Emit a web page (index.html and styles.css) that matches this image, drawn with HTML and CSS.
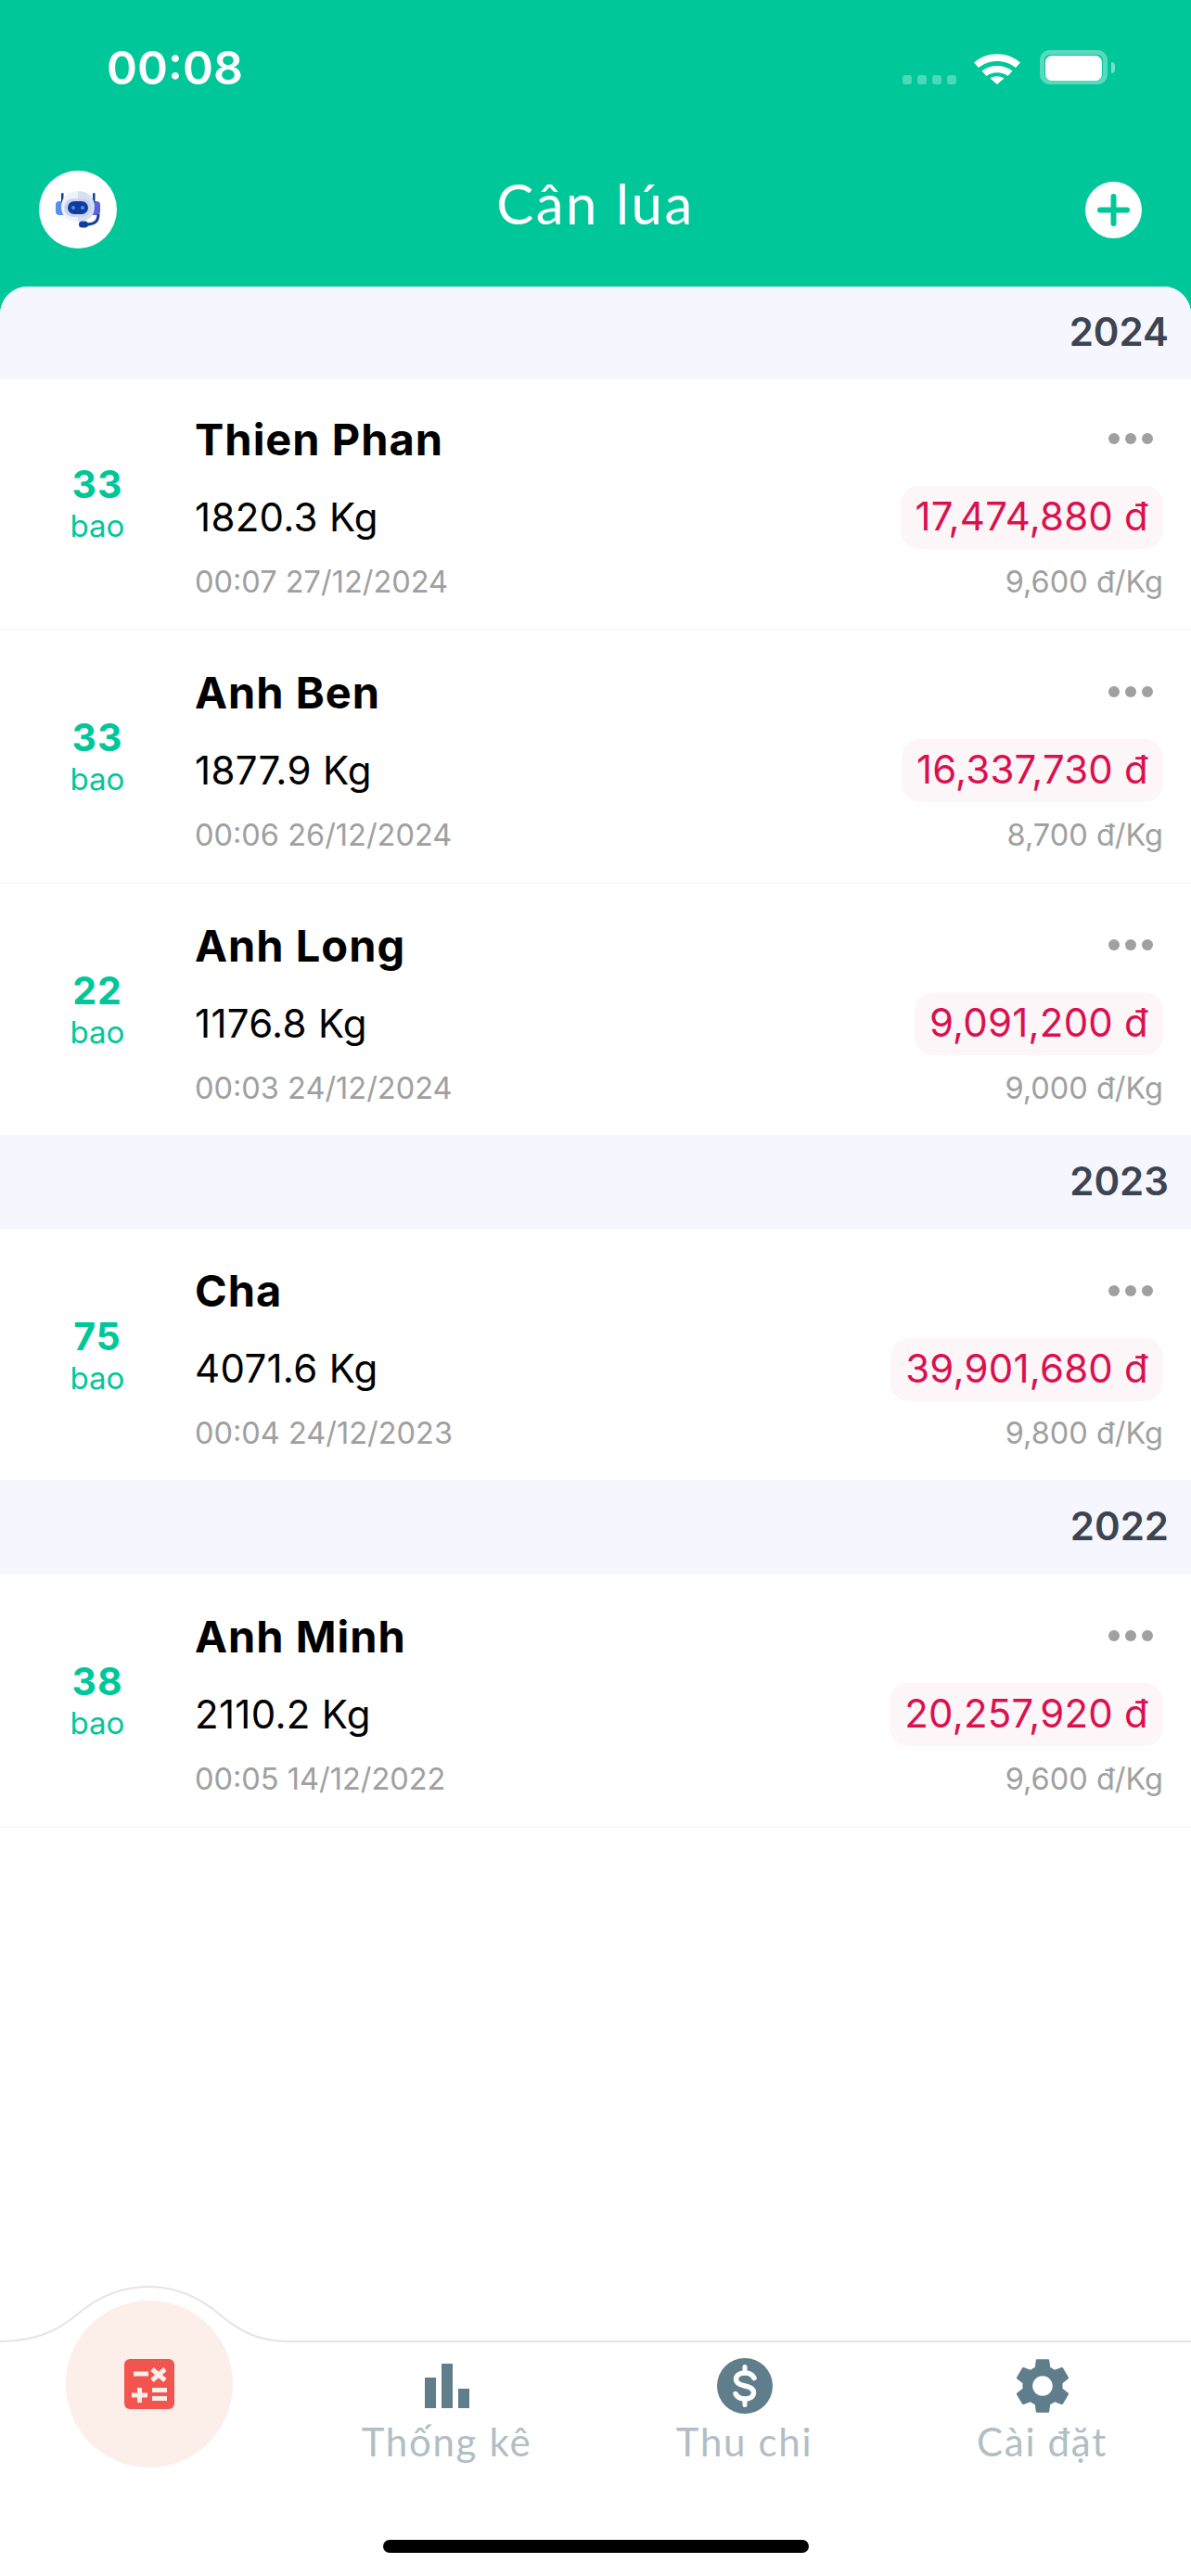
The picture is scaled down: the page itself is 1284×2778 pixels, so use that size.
FILE: index.html
```html
<!DOCTYPE html>
<html lang="vi">
<head>
    <meta charset="UTF-8">
    <meta name="viewport" content="width=device-width, initial-scale=1.0">
    <title>Cân lúa</title>
    <link rel="stylesheet" href="styles.css">
</head>
<body>
    <div class="app">
        <header class="header">
            <div class="status-bar">
                <span class="clock">00:08</span>
                <div class="status-icons">
                    <div class="signal"><i></i><i></i><i></i><i></i></div>
                    <svg class="wifi" width="52" height="37" viewBox="0 0 52 37">
                        <path d="M1 13.5C14.500 1 37.500 1 51 13.500L46 19C35 9.500 17 9.500 6 19Z" fill="#fff"/>
                        <path d="M9.500 22.500C18 15 34 15 42.500 22.500L37.500 28C31 23 21 23 14.500 28Z" fill="#fff"/>
                        <path d="M18.500 30.500C23 27.500 29 27.500 33.500 30.500L26 37Z" fill="#fff"/>
                    </svg>
                    <div class="battery"><div class="battery-fill"></div></div>
                    <div class="battery-cap"></div>
                </div>
            </div>
            <div class="title-bar">
                <div class="bot-btn">
                    <svg width="84" height="84" viewBox="0 0 84 84">
                        <rect x="18" y="33" width="11" height="15" rx="4" fill="#5b8def"/>
                        <rect x="55" y="33" width="11" height="15" rx="4" fill="#5b5fe0"/>
                        <rect x="24" y="24" width="2.500" height="11" rx="1.200" fill="#123f95"/>
                        <rect x="58" y="24" width="2.500" height="11" rx="1.200" fill="#123f95"/>
                        <path d="M42 22C31 22 24 29 24 39C24 49 31 55 42 55Z" fill="#eef2fa"/>
                        <path d="M42 22C53 22 60 29 60 39C60 49 53 55 42 55Z" fill="#d6e0f2"/>
                        <rect x="27" y="30" width="30" height="20" rx="10" fill="#c9d5ec"/>
                        <rect x="31" y="33" width="22" height="14" rx="7" fill="#0f3d9c"/>
                        <circle cx="37" cy="40" r="2" fill="#4f8df5"/>
                        <circle cx="47" cy="40" r="2" fill="#4f8df5"/>
                        <path d="M64 47C64 55 60 58 50 58" fill="none" stroke="#123f95" stroke-width="3"/>
                        <rect x="43" y="54.500" width="10" height="7" rx="3.500" fill="#123f95"/>
                    </svg>
                </div>
                <h1 class="title">Cân lúa</h1>
                <div class="add-btn">
                    <svg width="61" height="61" viewBox="0 0 61 61">
                        <path d="M30.500 16V45M16 30.500H45" stroke="#00c79a" stroke-width="6" stroke-linecap="round"/>
                    </svg>
                </div>
            </div>
        </header>

        <main class="sheet">
            <div class="year first">2024</div>
            <div class="row first">
                <div class="count"><b>33</b><span>bao</span></div>
                <div class="info">
                    <div class="line-top"><div class="name">Thien Phan</div><div class="dots"><i></i><i></i><i></i></div></div>
                    <div class="line-mid"><div class="weight">1820.3 Kg</div><div class="amount">17,474,880 đ</div></div>
                    <div class="line-low"><span>00:07 27/12/2024</span><span>9,600 đ/Kg</span></div>
                </div>
            </div>
            <div class="row">
                <div class="count"><b>33</b><span>bao</span></div>
                <div class="info">
                    <div class="line-top"><div class="name">Anh Ben</div><div class="dots"><i></i><i></i><i></i></div></div>
                    <div class="line-mid"><div class="weight">1877.9 Kg</div><div class="amount">16,337,730 đ</div></div>
                    <div class="line-low"><span>00:06 26/12/2024</span><span>8,700 đ/Kg</span></div>
                </div>
            </div>
            <div class="row last">
                <div class="count"><b>22</b><span>bao</span></div>
                <div class="info">
                    <div class="line-top"><div class="name">Anh Long</div><div class="dots"><i></i><i></i><i></i></div></div>
                    <div class="line-mid"><div class="weight">1176.8 Kg</div><div class="amount">9,091,200 đ</div></div>
                    <div class="line-low"><span>00:03 24/12/2024</span><span>9,000 đ/Kg</span></div>
                </div>
            </div>
            <div class="year">2023</div>
            <div class="row last">
                <div class="count"><b>75</b><span>bao</span></div>
                <div class="info">
                    <div class="line-top"><div class="name">Cha</div><div class="dots"><i></i><i></i><i></i></div></div>
                    <div class="line-mid"><div class="weight">4071.6 Kg</div><div class="amount">39,901,680 đ</div></div>
                    <div class="line-low"><span>00:04 24/12/2023</span><span>9,800 đ/Kg</span></div>
                </div>
            </div>
            <div class="year">2022</div>
            <div class="row">
                <div class="count"><b>38</b><span>bao</span></div>
                <div class="info">
                    <div class="line-top"><div class="name">Anh Minh</div><div class="dots"><i></i><i></i><i></i></div></div>
                    <div class="line-mid"><div class="weight">2110.2 Kg</div><div class="amount">20,257,920 đ</div></div>
                    <div class="line-low"><span>00:05 14/12/2022</span><span>9,600 đ/Kg</span></div>
                </div>
            </div>
        </main>

        <footer class="tabbar">
            <svg class="tab-curve" width="1284" height="62" viewBox="0 0 1284 62">
                <path d="M0 60C35 60 60 50 82 32C105 12 130 1 160 1C190 1 215 12 238 32C260 50 280 60 310 60H1284" fill="none" stroke="#e2e4e6" stroke-width="2"/>
            </svg>
            <nav class="tabs">
                <div class="tab">
                    <div class="calc-btn">
                        <svg width="54" height="54" viewBox="0 0 54 54">
                            <rect width="54" height="54" rx="6" fill="#f25450"/>
                            <path d="M10 16H26M30 11L44 23M44 11L30 23M8 39H25M16.500 31V47M30 33.500H46M30 42.500H46" stroke="#fceee9" stroke-width="5"/>
                        </svg>
                    </div>
                </div>
                <div class="tab">
                    <svg class="tab-icon" width="60" height="60" viewBox="0 0 60 60">
                        <rect x="6" y="21" width="12" height="33" fill="#607d8b"/>
                        <rect x="24" y="6" width="12" height="48" fill="#607d8b"/>
                        <rect x="42" y="33" width="12" height="21" fill="#607d8b"/>
                    </svg>
                    <span class="tab-label">Thống kê</span>
                </div>
                <div class="tab">
                    <svg class="tab-icon" width="60" height="60" viewBox="0 0 60 60">
                        <circle cx="30" cy="30" r="30" fill="#607d8b"/>
                        <path d="M40 21.500C38 17.500 34.500 16 30.500 16C24.500 16 20.500 18.500 20.500 22.800C20.500 27.500 25 29 30 30C35 31 39.500 32.500 39.500 37.200C39.500 41.500 35.500 44 30 44C25.500 44 22 42.500 20 38.500" fill="none" stroke="#fff" stroke-width="5.500" stroke-linecap="round"/>
                        <path d="M30 9.500V14M30 46V50.500" stroke="#fff" stroke-width="5" stroke-linecap="round"/>
                    </svg>
                    <span class="tab-label">Thu chi</span>
                </div>
                <div class="tab">
                    <svg class="tab-icon" width="60" height="60" viewBox="2.400 2 19.200 20">
                        <path fill="#607d8b" d="M19.140 12.940c.04-.3.06-.61.06-.94 0-.32-.02-.64-.07-.94l2.030-1.580c.18-.14.23-.41.12-.61l-1.920-3.320c-.12-.22-.37-.29-.59-.22l-2.390.96c-.5-.38-1.030-.7-1.620-.94l-.36-2.540c-.04-.24-.24-.41-.48-.41h-3.840c-.24 0-.43.17-.47.41l-.36 2.540c-.59.24-1.130.57-1.620.94l-2.390-.96c-.22-.08-.47 0-.59.22L2.740 8.870c-.12.21-.08.47.12.61l2.030 1.580c-.05.3-.09.63-.09.94s.02.64.07.94l-2.030 1.580c-.18.14-.23.41-.12.61l1.920 3.320c.12.22.37.29.59.22l2.390-.96c.5.38 1.030.7 1.620.94l.36 2.540c.05.24.24.41.48.41h3.840c.24 0 .44-.17.47-.41l.36-2.540c.59-.24 1.130-.56 1.620-.94l2.390.96c.22.08.47 0 .59-.22l1.920-3.320c.12-.22.07-.47-.12-.61l-2.010-1.580zM12 15.600c-1.980 0-3.600-1.620-3.600-3.600s1.620-3.600 3.600-3.600 3.600 1.620 3.600 3.600-1.620 3.600-3.600 3.600z"/>
                    </svg>
                    <span class="tab-label">Cài đặt</span>
                </div>
            </nav>
            <div class="home-bar"></div>
        </footer>
    </div>
</body>
</html>
```

FILE: styles.css
```css
:root {
    --green: #00c79a;
    --year-bg: #f6f7fe;
    --grey: #a0a0a0;
    --red: #d9114f;
    --tab-text: #b0bec5;
}

* {
    margin: 0;
    padding: 0;
    box-sizing: border-box;
}

body {
    font-family: "Inter", "Liberation Sans", sans-serif;
    color: #000;
    background-color: #fff;
}

.app {
    display: flex;
    flex-direction: column;
    height: 100vh;
    overflow: hidden;
    background-color: var(--green);
}

/* header */
.header {
    height: 309px;
    color: #fff;
}

.status-bar {
    display: flex;
    justify-content: space-between;
    align-items: flex-start;
    height: 183px;
    padding: 43px 82px 0 115px;
}

.clock {
    font-size: 50px;
    font-weight: 600;
    line-height: 60px;
}

.status-icons {
    display: flex;
    align-items: flex-start;
    margin-top: 10px;
}

.signal {
    display: flex;
    gap: 6px;
    margin: 28px 18px 0 0;
}

.signal i {
    width: 10px;
    height: 10px;
    border-radius: 3px;
    background-color: rgba(255, 255, 255, 0.3);
}

.wifi {
    margin: 1px 19px 0 0;
}

.battery {
    width: 75px;
    height: 39px;
    padding: 5px;
    border: 1px solid transparent;
    border-radius: 12px;
    box-shadow: inset 0 0 0 5px rgba(255, 255, 255, 0.35);
}

.battery-fill {
    height: 100%;
    margin: 1px;
    border-radius: 7px;
    background-color: #fff;
}

.battery-cap {
    width: 4px;
    height: 12px;
    margin: 14px 0 0 3px;
    border-radius: 0 4px 4px 0;
    background-color: rgba(255, 255, 255, 0.45);
}

.title-bar {
    display: grid;
    grid-template-columns: 1fr auto 1fr;
    align-items: center;
    height: 84px;
    padding: 0 42px;
}

.bot-btn {
    width: 84px;
    height: 84px;
    border-radius: 50%;
    background-color: #fff;
}

.add-btn {
    justify-self: end;
    width: 61px;
    height: 61px;
    margin-right: 11px;
    border-radius: 50%;
    background-color: #fff;
}

.title {
    padding-bottom: 14px;
    font-family: "Lato", sans-serif;
    font-size: 60px;
    font-weight: 400;
    letter-spacing: 2.5px;
}

/* list */
.sheet {
    flex: 1;
    min-height: 0;
    border-radius: 30px 30px 0 0;
    overflow: hidden;
    background-color: #fff;
}

.year {
    height: 102px;
    padding-right: 24px;
    font-size: 42px;
    font-weight: 600;
    line-height: 99px;
    text-align: right;
    color: #3d4451;
    background-color: var(--year-bg);
}

.year.first {
    height: 100px;
    line-height: 97px;
}

.row {
    display: flex;
    height: 273px;
    padding: 32px 30px 0 0;
    border-bottom: 2px solid var(--year-bg);
}

.row.first {
    height: 271px;
    padding-top: 30px;
}

.row.last {
    height: 270.5px;
    border-bottom: none;
}

.count {
    display: flex;
    flex-direction: column;
    align-items: center;
    flex: none;
    width: 210px;
    padding-top: 58px;
    color: var(--green);
}

.count b {
    font-size: 41px;
    font-weight: 700;
    line-height: 50px;
    letter-spacing: 1px;
}

.count span {
    font-size: 33px;
    line-height: 40px;
}

.info {
    flex: 1;
}

.line-top,
.line-mid,
.line-low {
    display: flex;
    justify-content: space-between;
    align-items: center;
}

.line-top {
    height: 68px;
}

.line-mid {
    height: 68px;
    margin-top: 17px;
}

.line-low {
    height: 52px;
    margin-top: 9px;
    font-size: 32.5px;
    color: var(--grey);
}

.name {
    font-size: 47px;
    font-weight: 700;
    letter-spacing: 1px;
}

.dots {
    display: flex;
    gap: 6px;
    margin-right: 11px;
}

.dots i {
    width: 12px;
    height: 12px;
    border-radius: 50%;
    background-color: var(--grey);
}

.weight {
    padding-bottom: 2px;
    font-size: 42px;
    letter-spacing: 0.3px;
}

.amount {
    height: 68px;
    padding: 0 16px;
    border-radius: 20px;
    font-size: 42px;
    line-height: 66px;
    letter-spacing: 0.2px;
    color: var(--red);
    background-color: #fdf6f9;
}

/* bottom tabs */
.tabbar {
    position: relative;
    flex: none;
    height: 253px;
    background-color: #fff;
}

.tab-curve {
    position: absolute;
    left: 0;
    top: -60px;
}

.tabs {
    position: relative;
    display: grid;
    grid-template-columns: repeat(4, 1fr);
    height: 214px;
    padding-top: 18px;
}

.tab {
    display: flex;
    flex-direction: column;
    align-items: center;
}

.calc-btn {
    display: flex;
    justify-content: center;
    align-items: center;
    width: 180px;
    height: 180px;
    margin-top: -62px;
    border-radius: 50%;
    background-color: #fceee9;
}

.tab-icon {
    flex: none;
}

.tab-label {
    margin-top: 2px;
    font-family: "Lato", sans-serif;
    font-size: 42px;
    line-height: 56px;
    letter-spacing: 1.7px;
    color: var(--tab-text);
}

.home-bar {
    width: 459px;
    height: 14px;
    margin: 0 auto;
    border-radius: 7px;
    background-color: #000;
}
```
